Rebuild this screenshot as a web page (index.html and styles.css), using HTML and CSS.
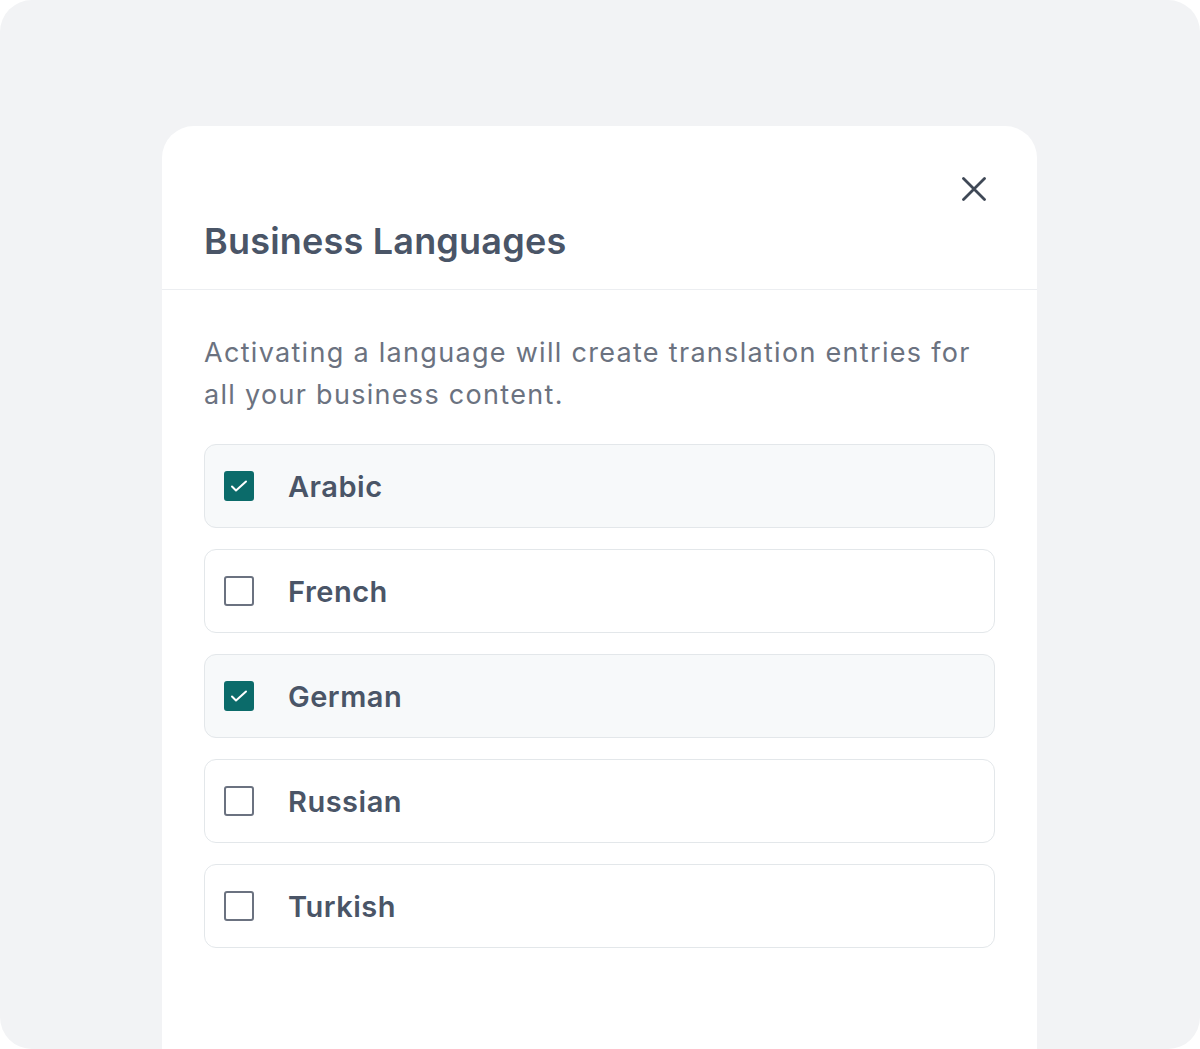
FILE: index.html
```html
<!DOCTYPE html>
<html lang="en">
<head>
  <meta charset="UTF-8">
  <meta name="viewport" content="width=device-width, initial-scale=1.0">
  <title>Business Languages</title>
  <link rel="stylesheet" href="styles.css">
</head>
<body>
  <div class="frame">
    <!-- Модальное окно выбора языков -->
    <div class="modal">
      <div class="modal-header">
        <button class="close-btn" aria-label="Close">
          <svg width="24" height="24" viewBox="0 0 24 24" fill="none" stroke="currentColor" stroke-width="2.8" stroke-linecap="round">
            <path d="M1.5 1.5L22.5 22.5M22.5 1.5L1.5 22.5"/>
          </svg>
        </button>
        <h1 class="modal-title">Business Languages</h1>
      </div>

      <div class="modal-body">
        <p class="hint">Activating a language will create translation entries for all your business content.</p>

        <ul class="lang-list">
          <li class="lang-item checked">
            <span class="checkbox"><svg width="30" height="30" viewBox="0 0 30 30" fill="none" stroke="#fff" stroke-width="2" stroke-linecap="round" stroke-linejoin="round"><path d="M8 15.5L12 19.5L22 10.5"/></svg></span>
            <span class="lang-name">Arabic</span>
          </li>
          <li class="lang-item">
            <span class="checkbox"></span>
            <span class="lang-name">French</span>
          </li>
          <li class="lang-item checked">
            <span class="checkbox"><svg width="30" height="30" viewBox="0 0 30 30" fill="none" stroke="#fff" stroke-width="2" stroke-linecap="round" stroke-linejoin="round"><path d="M8 15.5L12 19.5L22 10.5"/></svg></span>
            <span class="lang-name">German</span>
          </li>
          <li class="lang-item">
            <span class="checkbox"></span>
            <span class="lang-name">Russian</span>
          </li>
          <li class="lang-item">
            <span class="checkbox"></span>
            <span class="lang-name">Turkish</span>
          </li>
        </ul>
      </div>
    </div>
  </div>
</body>
</html>
```

FILE: styles.css
```css
* {
  margin: 0;
  padding: 0;
  box-sizing: border-box;
}
body {
  font-family: Inter, "Noto Sans", sans-serif;
  background: #fff;
  color: #4b5563;
}
/* Серая подложка */
.frame {
  height: 1049px;
  background: #f2f3f5;
  border-radius: 32px;
  padding: 126px 0 0 162px;
  display: flex;
  overflow: hidden;
}
.modal {
  width: 875px;
  background: #fff;
  border-radius: 32px 32px 0 0;
}
/* Шапка */
.modal-header {
  padding: 51px 51px 28px 42px;
  border-bottom: 1px solid #eceef1;
  display: flex;
  flex-direction: column;
}
.close-btn {
  align-self: flex-end;
  width: 24px;
  height: 24px;
  border: none;
  background: none;
  color: #3f4856;
  cursor: pointer;
}
.modal-title {
  margin-top: 20px;
  font-size: 36px;
  line-height: 40px;
  font-weight: 600;
  letter-spacing: 0.2px;
  color: #4a5567;
}
/* Содержимое */
.modal-body {
  padding: 42px 42px;
}
.hint {
  font-size: 27px;
  line-height: 42px;
  letter-spacing: 1.3px;
  color: #6b7280;
  margin-bottom: 28px;
}
.lang-list {
  list-style: none;
  display: flex;
  flex-direction: column;
  gap: 21px;
}
.lang-item {
  height: 84px;
  display: flex;
  align-items: center;
  gap: 34px;
  padding-left: 19px;
  border: 1px solid #e3e7ea;
  border-radius: 12px;
  background: #fff;
}
.lang-item.checked {
  background: #f7f9fa;
}
.checkbox {
  position: relative;
  width: 30px;
  height: 30px;
  border: 2px solid #6b7280;
  border-radius: 3px;
}
.checked .checkbox {
  background: #0b6b6a;
  border-color: #0b6b6a;
}
/* Галочка рисуется поверх рамки, по всей площади квадрата */
.checkbox svg {
  position: absolute;
  top: -2px;
  left: -2px;
}
.lang-name {
  font-size: 29px;
  font-weight: 600;
  letter-spacing: 0.5px;
  color: #4a5567;
}
```
